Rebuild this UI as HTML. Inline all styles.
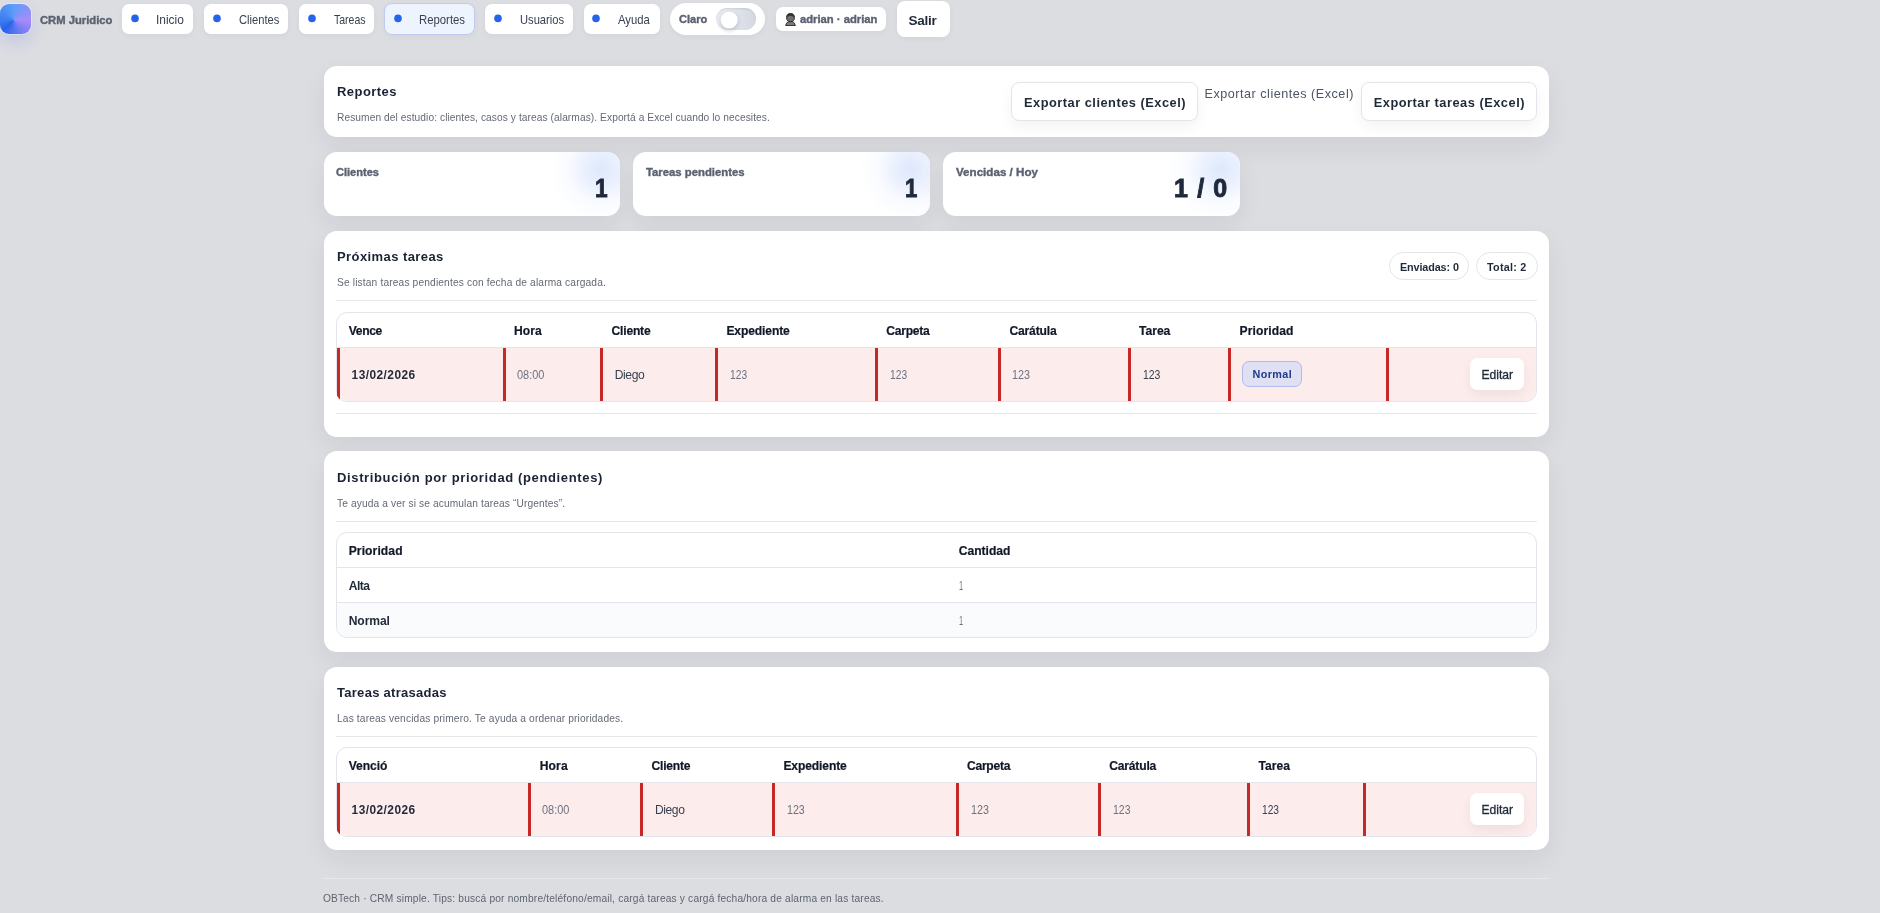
<!DOCTYPE html>
<html lang="es">
<head>
<meta charset="utf-8">
<title>CRM Juridico · Reportes</title>
<style>
*{box-sizing:border-box;margin:0;padding:0}
html,body{width:1880px;height:913px;overflow:hidden}
body{position:relative;background:#dcdde1;font-family:"Liberation Sans",sans-serif;color:#1f2937}
#app{position:absolute;left:0;top:0;width:1880px;height:913px;will-change:transform}
.abs,.t,.card,.pill,.btn,.hr,.tbl,.bar,.dot{position:absolute}
.t{white-space:pre;line-height:1;font-weight:400;display:block}
.card{background:#fff;border-radius:13px;left:324px;width:1225px;box-shadow:0 10px 26px rgba(15,23,42,.065)}
.stat{width:297px;overflow:hidden}
.stat::after{content:"";position:absolute;right:-33px;top:-35px;width:104px;height:104px;border-radius:50%;background:radial-gradient(closest-side,rgba(222,232,252,1),rgba(228,236,253,.75) 35%,rgba(240,245,254,.4) 65%,rgba(255,255,255,0) 100%)}
.pill{background:#fff;border-radius:7px;top:4px;height:30px;box-shadow:0 2px 6px rgba(15,23,42,.04)}
.pill.on{background:#eef4fd;border:1px solid #bfc9f1;box-shadow:0 2px 6px rgba(15,23,42,.04)}
.dot{width:8px;height:8px;border-radius:50%;background:#2563eb;top:14px;transform:translateY(.4px) scale(.95)}
.btn{background:#fff;border:1px solid #e3e5ea;border-radius:8px;box-shadow:0 6px 14px rgba(15,23,42,.05)}
.hr{height:1px;background:#e5e7eb;left:336px;width:1201px}
.tbl{left:336px;width:1201px;border:1px solid #e3e5ea;border-radius:11px;overflow:hidden;background:#fff}
.sx{transform-origin:0 50%}
.xb{-webkit-text-stroke:.35px currentColor}
.hd{-webkit-text-stroke:.2px currentColor}
.md{-webkit-text-stroke:.3px currentColor}
.hv{-webkit-text-stroke:.9px #1e293b}
.row{position:absolute;left:0;right:0}
.late{background:#fcecec}
.bar{width:3px;background:#c62828;top:0;bottom:0}
.chip{position:absolute;border:1px solid #e3e5ea;border-radius:999px;background:#fff}
</style>
</head>
<body>
<div id="app">
<nav>
  <div class="abs" style="left:0;top:4px;width:31px;height:30px;border-radius:9px;background:conic-gradient(from 225deg at 44% 54%,#2563eb 0%,#3b7cf0 12%,#5b9df9 37.5%,#a78bfa 62.5%,#6b7bf1 80%,#2563eb 100%);box-shadow:0 0 0 1px rgba(255,255,255,.35),0 8px 16px rgba(59,100,240,.16)"></div>
  <span class="t xb sx" style="left:40.00px;top:16.00px;font-size:10.4px;letter-spacing:0.000px;font-weight:700;color:#5b6170;transform:scaleX(1.0808)">CRM Juridico</span>
  <a class="nav-item"><b class="pill" style="left:122px;width:71px"></b><i class="dot" style="left:131px"></i><span class="t sx" style="left:156.32px;top:14.00px;font-size:12.2px;letter-spacing:0.000px;color:#374151;transform:scaleX(0.9793)">Inicio</span></a>
  <a class="nav-item"><b class="pill" style="left:204px;width:84px"></b><i class="dot" style="left:213px"></i><span class="t sx" style="left:238.75px;top:14.00px;font-size:12.2px;letter-spacing:0.000px;color:#374151;transform:scaleX(0.9161)">Clientes</span></a>
  <a class="nav-item"><b class="pill" style="left:299px;width:75px"></b><i class="dot" style="left:308px"></i><span class="t sx" style="left:333.50px;top:14.00px;font-size:12.2px;letter-spacing:0.000px;color:#374151;transform:scaleX(0.8634)">Tareas</span></a>
  <a class="nav-item active"><b class="pill on" style="left:384px;top:3px;width:91px;height:32px;border-radius:8px"></b><i class="dot" style="left:393.5px"></i><span class="t sx" style="left:419.07px;top:14.00px;font-size:12.2px;letter-spacing:0.000px;color:#374151;transform:scaleX(0.9306)">Reportes</span></a>
  <a class="nav-item"><b class="pill" style="left:484.5px;width:88.5px"></b><i class="dot" style="left:493.5px"></i><span class="t sx" style="left:519.75px;top:14.00px;font-size:12.2px;letter-spacing:0.000px;color:#374151;transform:scaleX(0.9167)">Usuarios</span></a>
  <a class="nav-item"><b class="pill" style="left:583.5px;width:76px"></b><i class="dot" style="left:592.25px"></i><span class="t sx" style="left:618.00px;top:14.00px;font-size:12.2px;letter-spacing:0.000px;color:#374151;transform:scaleX(0.9260)">Ayuda</span></a>
  <div class="pill" style="left:670px;width:95px;top:3px;height:32px;border-radius:16px"></div>
  <span class="t xb sx" style="left:679.40px;top:15.00px;font-size:10.4px;letter-spacing:0.000px;font-weight:700;color:#5b6170;transform:scaleX(1.0624)">Claro</span>
  <div class="abs" style="left:716px;top:8px;width:40px;height:22px;border-radius:11px;background:linear-gradient(90deg,#eceef3,#d3d8e2);box-shadow:inset 0 1px 2px rgba(15,23,42,.10)"></div>
  <div class="abs" style="left:720px;top:10px;width:18px;height:18px;border-radius:50%;background:#fff;box-shadow:0 2px 5px rgba(15,23,42,.2);transform:translate(.2px,1px) scale(.95)"></div>
  <div class="pill" style="left:776px;width:110px;top:7px;height:24px;border-radius:7px"></div>
  <svg class="abs" style="left:785.3px;top:13px" width="11" height="13.2" viewBox="0 0 11 13.2"><path d="M0.7 12.6 L1.6 10.2 Q2.2 9.1 3.9 8.6 L7.1 8.6 Q8.8 9.1 9.4 10.2 L10.3 12.6 Z" fill="#7c7c7c" stroke="#2a2a2a" stroke-width="1" stroke-linejoin="round"/><ellipse cx="5.5" cy="4.6" rx="3.9" ry="4.1" fill="#6f6f6f" stroke="#2a2a2a" stroke-width="1"/><path d="M1.6 4.4 Q1.7 0.6 5.5 0.5 Q9.3 0.6 9.4 4.4 Q7.6 2.6 5.5 2.7 Q3.4 2.6 1.6 4.4 Z" fill="#333"/></svg>
  <span class="t xb sx" style="left:800.00px;top:15.00px;font-size:10.4px;letter-spacing:0.000px;font-weight:700;color:#5b6170;transform:scaleX(1.0807)">adrian · adrian</span>
  <div class="pill" style="left:897px;width:52.5px;top:1px;height:36px;border-radius:8px"></div>
  <span class="t" style="left:908.50px;top:14.00px;font-size:13.5px;letter-spacing:-0.253px;font-weight:700;color:#1f2937">Salir</span>
</nav>
<main>
  <section class="panel">
  <div class="card" style="top:65.5px;height:71.5px"></div>
  <h1 class="t" style="left:337.00px;top:85.00px;font-size:13px;letter-spacing:0.447px;font-weight:700;color:#1a2233">Reportes</h1><p class="t" style="left:337.00px;top:113.00px;font-size:10.2px;letter-spacing:0.076px;color:#636975">Resumen del estudio: clientes, casos y tareas (alarmas). Exportá a Excel cuando lo necesites.</p>
  <a class="action"><b class="btn" style="left:1011px;top:82px;width:187px;height:39px"></b><span class="t" style="left:1024.00px;top:97.00px;font-size:12.8px;letter-spacing:0.504px;font-weight:700;color:#1f2937">Exportar clientes (Excel)</span></a>
  <a class="action"><span class="t" style="left:1204.50px;top:88.00px;font-size:12.6px;letter-spacing:0.517px;color:#4b5563">Exportar clientes (Excel)</span></a>
  <a class="action"><b class="btn" style="left:1361px;top:82px;width:176px;height:39px"></b><span class="t" style="left:1373.75px;top:97.00px;font-size:12.8px;letter-spacing:0.514px;font-weight:700;color:#1f2937">Exportar tareas (Excel)</span></a>
  </section>

  <section class="kpis">
  <article class="kpi"><div class="card stat" style="left:324px;top:151.5px;width:296.4px;height:64.5px"></div><span class="t xb sx" style="left:336.40px;top:168.00px;font-size:10.4px;letter-spacing:0.000px;font-weight:700;color:#5b6170;transform:scaleX(1.0629)">Clientes</span><span class="t hv sx" style="left:594.79px;top:176.00px;font-size:25px;letter-spacing:0.000px;font-weight:700;color:#1e293b;transform:scaleX(0.9077)">1</span></article>
  <article class="kpi"><div class="card stat" style="left:633px;top:151.5px;height:64.5px"></div><span class="t xb sx" style="left:646.40px;top:168.00px;font-size:10.4px;letter-spacing:0.000px;font-weight:700;color:#5b6170;transform:scaleX(1.0894)">Tareas pendientes</span><span class="t hv sx" style="left:904.52px;top:176.00px;font-size:25px;letter-spacing:0.000px;font-weight:700;color:#1e293b;transform:scaleX(0.8846)">1</span></article>
  <article class="kpi"><div class="card stat" style="left:943px;top:151.5px;height:64.5px"></div><span class="t xb sx" style="left:956.00px;top:168.00px;font-size:10.4px;letter-spacing:0.000px;font-weight:700;color:#5b6170;transform:scaleX(1.1174)">Vencidas / Hoy</span><span class="t hv" style="left:1174.00px;top:176.00px;font-size:25px;letter-spacing:1.140px;font-weight:700;color:#1e293b">1 / 0</span></article>
  </section>

  <section class="panel">
  <div class="card" style="top:230.5px;height:206px"></div>
  <h2 class="t" style="left:337.00px;top:250.00px;font-size:13px;letter-spacing:0.420px;font-weight:700;color:#1a2233">Próximas tareas</h2><p class="t" style="left:337.00px;top:278.00px;font-size:10.2px;letter-spacing:0.151px;color:#636975">Se listan tareas pendientes con fecha de alarma cargada.</p>
  <div class="chip" style="left:1389px;top:252px;width:80px;height:28px"></div><span class="t" style="left:1399.90px;top:262.00px;font-size:10.8px;letter-spacing:-0.101px;font-weight:700;color:#1f2937">Enviadas: 0</span>
  <div class="chip" style="left:1476px;top:252px;width:61.5px;height:28px"></div><span class="t" style="left:1487.10px;top:262.00px;font-size:10.8px;letter-spacing:0.217px;font-weight:700;color:#1f2937">Total: 2</span>
  <div class="hr" style="top:300px"></div>
  <div class="tbl" style="top:312px;height:89.5px">
    <div class="row" style="top:0;height:35px;border-bottom:1px solid #e3e5ea"></div>
    <div class="row late" style="top:35px;bottom:0">
      <i class="bar" style="left:166px"></i><i class="bar" style="left:263px"></i><i class="bar" style="left:378px"></i><i class="bar" style="left:538px"></i><i class="bar" style="left:661px"></i><i class="bar" style="left:791px"></i><i class="bar" style="left:891px"></i><i class="bar" style="left:1049px"></i>
    </div>
  </div>
  <div class="abs" style="left:336px;top:312px;width:1201px;height:89.5px;border-radius:11px;overflow:hidden"><i class="bar" style="left:.6px;top:36px;width:3.4px"></i></div>
  <span class="t hd" style="left:348.70px;top:325.00px;font-size:12.1px;letter-spacing:-0.335px;font-weight:700;color:#111827">Vence</span><span class="t hd" style="left:513.90px;top:325.00px;font-size:12.1px;letter-spacing:0.124px;font-weight:700;color:#111827">Hora</span><span class="t hd" style="left:611.60px;top:325.00px;font-size:12.1px;letter-spacing:-0.216px;font-weight:700;color:#111827">Cliente</span><span class="t hd" style="left:726.40px;top:325.00px;font-size:12.1px;letter-spacing:-0.122px;font-weight:700;color:#111827">Expediente</span><span class="t hd" style="left:886.30px;top:325.00px;font-size:12.1px;letter-spacing:-0.268px;font-weight:700;color:#111827">Carpeta</span><span class="t hd" style="left:1009.50px;top:325.00px;font-size:12.1px;letter-spacing:-0.181px;font-weight:700;color:#111827">Carátula</span><span class="t hd" style="left:1139.00px;top:325.00px;font-size:12.1px;letter-spacing:-0.012px;font-weight:700;color:#111827">Tarea</span><span class="t hd" style="left:1239.60px;top:325.00px;font-size:12.1px;letter-spacing:0.100px;font-weight:700;color:#111827">Prioridad</span>
  <span class="t" style="left:351.60px;top:370.00px;font-size:11.9px;letter-spacing:0.445px;font-weight:700;color:#1f2937">13/02/2026</span><span class="t sx" style="left:516.60px;top:369.00px;font-size:12.4px;letter-spacing:0.000px;color:#6b7280;transform:scaleX(0.8838)">08:00</span><span class="t" style="left:614.70px;top:369.00px;font-size:12.1px;letter-spacing:-0.393px;color:#374151">Diego</span><span class="t sx" style="left:729.90px;top:369.00px;font-size:12.4px;letter-spacing:0.000px;color:#6b7280;transform:scaleX(0.8276)">123</span><span class="t sx" style="left:890.10px;top:369.00px;font-size:12.4px;letter-spacing:0.000px;color:#6b7280;transform:scaleX(0.8276)">123</span><span class="t sx" style="left:1012.30px;top:369.00px;font-size:12.4px;letter-spacing:0.000px;color:#6b7280;transform:scaleX(0.8709)">123</span><span class="t sx" style="left:1142.50px;top:369.00px;font-size:12.4px;letter-spacing:0.000px;color:#374151;transform:scaleX(0.8421)">123</span>
  <div class="abs" style="left:1242px;top:361px;width:60px;height:26px;border-radius:7px;background:#dfe0f3;border:1px solid #b3bbe8"></div><span class="t" style="left:1252.60px;top:369.00px;font-size:10.8px;letter-spacing:0.380px;font-weight:700;color:#1e3a8a">Normal</span>
  <div class="abs" style="left:1470px;top:358px;width:54px;height:32px;border-radius:7px;background:#fff;box-shadow:0 5px 12px rgba(15,23,42,.06)"></div><span class="t md" style="left:1481.60px;top:369.00px;font-size:12.1px;letter-spacing:-0.053px;color:#1f2937">Editar</span>
  <div class="hr" style="top:413px"></div>
  </section>

  <section class="panel">
  <div class="card" style="top:451px;height:200.5px"></div>
  <h2 class="t" style="left:337.00px;top:471.00px;font-size:13px;letter-spacing:0.634px;font-weight:700;color:#1a2233">Distribución por prioridad (pendientes)</h2><p class="t" style="left:337.00px;top:499.00px;font-size:10.2px;letter-spacing:0.119px;color:#636975">Te ayuda a ver si se acumulan tareas “Urgentes”.</p>
  <div class="hr" style="top:521px"></div>
  <div class="tbl" style="top:532px;height:105.5px">
    <div class="row" style="top:0;height:35px;border-bottom:1px solid #e3e5ea"></div>
    <div class="row" style="top:35px;height:35px;border-bottom:1px solid #e3e5ea"></div>
    <div class="row" style="top:70px;bottom:0;background:#fafbfd"></div>
  </div>
  <span class="t hd" style="left:348.70px;top:545.00px;font-size:12.1px;letter-spacing:0.100px;font-weight:700;color:#111827">Prioridad</span><span class="t hd" style="left:958.80px;top:545.00px;font-size:12.1px;letter-spacing:-0.021px;font-weight:700;color:#111827">Cantidad</span><span class="t" style="left:348.70px;top:580.00px;font-size:12.1px;letter-spacing:-0.507px;font-weight:700;color:#1f2937">Alta</span><span class="t sx" style="left:958.80px;top:580.00px;font-size:12.4px;letter-spacing:0.000px;color:#6b7280;transform:scaleX(0.6000)">1</span><span class="t" style="left:348.70px;top:615.00px;font-size:12.1px;letter-spacing:-0.081px;font-weight:700;color:#1f2937">Normal</span><span class="t sx" style="left:958.80px;top:615.00px;font-size:12.4px;letter-spacing:0.000px;color:#6b7280;transform:scaleX(0.6000)">1</span>
  </section>

  <section class="panel">
  <div class="card" style="top:667px;height:183px"></div>
  <h2 class="t" style="left:337.00px;top:686.00px;font-size:13px;letter-spacing:0.284px;font-weight:700;color:#1a2233">Tareas atrasadas</h2><p class="t" style="left:337.00px;top:714.00px;font-size:10.2px;letter-spacing:0.150px;color:#636975">Las tareas vencidas primero. Te ayuda a ordenar prioridades.</p>
  <div class="hr" style="top:736px"></div>
  <div class="tbl" style="top:747px;height:89.5px">
    <div class="row" style="top:0;height:35px;border-bottom:1px solid #e3e5ea"></div>
    <div class="row late" style="top:35px;bottom:0">
      <i class="bar" style="left:191px"></i><i class="bar" style="left:303.2px"></i><i class="bar" style="left:435px"></i><i class="bar" style="left:619px"></i><i class="bar" style="left:761px"></i><i class="bar" style="left:910px"></i><i class="bar" style="left:1026.2px"></i>
    </div>
  </div>
  <div class="abs" style="left:336px;top:747px;width:1201px;height:89.5px;border-radius:11px;overflow:hidden"><i class="bar" style="left:.6px;top:36px;width:3.4px"></i></div>
  <span class="t hd" style="left:348.70px;top:760.00px;font-size:12.1px;letter-spacing:-0.060px;font-weight:700;color:#111827">Venció</span><span class="t hd" style="left:539.70px;top:760.00px;font-size:12.1px;letter-spacing:0.124px;font-weight:700;color:#111827">Hora</span><span class="t hd" style="left:651.50px;top:760.00px;font-size:12.1px;letter-spacing:-0.216px;font-weight:700;color:#111827">Cliente</span><span class="t hd" style="left:783.40px;top:760.00px;font-size:12.1px;letter-spacing:-0.122px;font-weight:700;color:#111827">Expediente</span><span class="t hd" style="left:967.00px;top:760.00px;font-size:12.1px;letter-spacing:-0.268px;font-weight:700;color:#111827">Carpeta</span><span class="t hd" style="left:1109.20px;top:760.00px;font-size:12.1px;letter-spacing:-0.181px;font-weight:700;color:#111827">Carátula</span><span class="t hd" style="left:1258.60px;top:760.00px;font-size:12.1px;letter-spacing:-0.012px;font-weight:700;color:#111827">Tarea</span>
  <span class="t" style="left:351.60px;top:805.00px;font-size:11.9px;letter-spacing:0.445px;font-weight:700;color:#1f2937">13/02/2026</span><span class="t sx" style="left:541.90px;top:804.00px;font-size:12.4px;letter-spacing:0.000px;color:#6b7280;transform:scaleX(0.8838)">08:00</span><span class="t" style="left:654.90px;top:804.00px;font-size:12.1px;letter-spacing:-0.393px;color:#374151">Diego</span><span class="t sx" style="left:786.75px;top:804.00px;font-size:12.4px;letter-spacing:0.000px;color:#6b7280;transform:scaleX(0.8589)">123</span><span class="t sx" style="left:970.60px;top:804.00px;font-size:12.4px;letter-spacing:0.000px;color:#6b7280;transform:scaleX(0.8661)">123</span><span class="t sx" style="left:1112.70px;top:804.00px;font-size:12.4px;letter-spacing:0.000px;color:#6b7280;transform:scaleX(0.8469)">123</span><span class="t sx" style="left:1262.40px;top:804.00px;font-size:12.4px;letter-spacing:0.000px;color:#374151;transform:scaleX(0.8228)">123</span>
  <div class="abs" style="left:1470px;top:793px;width:54px;height:32px;border-radius:7px;background:#fff;box-shadow:0 5px 12px rgba(15,23,42,.06)"></div><span class="t md" style="left:1481.60px;top:804.00px;font-size:12.1px;letter-spacing:-0.053px;color:#1f2937">Editar</span>
  </section>
</main>
<footer>
  <div class="abs" style="left:323px;top:878px;width:1226px;height:1px;background:#e7e8eb"></div>
  <span class="t" style="left:322.90px;top:894.00px;font-size:10.2px;letter-spacing:0.174px;color:#5e6470">OBTech · CRM simple. Tips: buscá por nombre/teléfono/email, cargá tareas y cargá fecha/hora de alarma en las tareas.</span>
</footer>
</div>
</body>
</html>
